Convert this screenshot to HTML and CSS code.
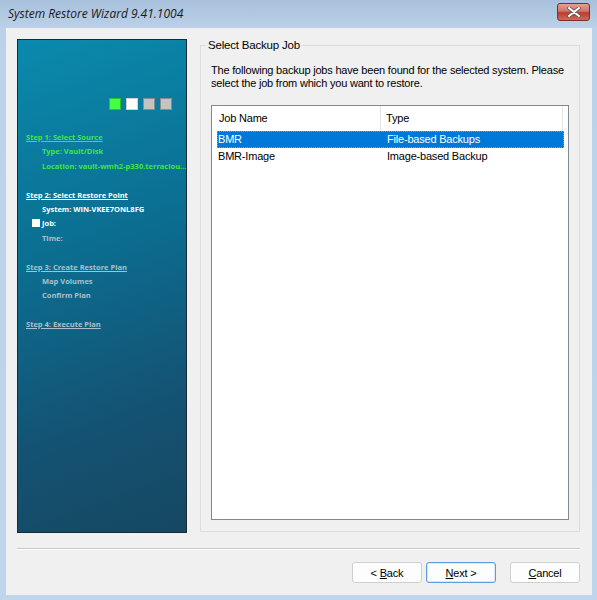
FILE: index.html
```html
<!DOCTYPE html>
<html lang="en">
<head>
    <meta charset="UTF-8">
    <title>System Restore Wizard 9.41.1004</title>
    <link rel="stylesheet" href="styles.css">
</head>
<body>
    <div class="window">
        <div class="titleBar">
            <span class="titleText">System Restore Wizard 9.41.1004</span>
            <button class="closeBtn" type="button" aria-label="Close">
                <svg width="14" height="10" viewBox="0 0 14 10">
                    <path d="M2 1 L12 9 M12 1 L2 9" stroke="#5a5a5a" stroke-width="3.6" stroke-linecap="round"/>
                    <path d="M2 1 L12 9 M12 1 L2 9" stroke="#ffffff" stroke-width="2" stroke-linecap="round"/>
                </svg>
            </button>
        </div>

        <div class="client">
            <div class="mainRow">
                <div class="sidebar">
                    <div class="progress">
                        <span class="dot done"></span>
                        <span class="dot current"></span>
                        <span class="dot"></span>
                        <span class="dot"></span>
                    </div>

                    <div class="steps">
                        <div class="step done">Step 1: Select Source</div>
                        <div class="item done">Type: Vault/Disk</div>
                        <div class="item done">Location: vault-wmh2-p330.terraclou...</div>
                        <div class="gap"></div>

                        <div class="step current">Step 2: Select Restore Point</div>
                        <div class="item current">System: WIN-VKEE7ONL8FG</div>
                        <div class="item current"><span class="marker"></span>Job:</div>
                        <div class="item">Time:</div>
                        <div class="gap"></div>

                        <div class="step">Step 3: Create Restore Plan</div>
                        <div class="item">Map Volumes</div>
                        <div class="item">Confirm Plan</div>
                        <div class="gap"></div>

                        <div class="step">Step 4: Execute Plan</div>
                    </div>
                </div>

                <fieldset class="groupBox">
                    <legend>Select Backup Job</legend>
                    <p class="intro">The following backup jobs have been found for the selected system. Please select the job from which you want to restore.</p>

                    <div class="listView">
                        <div class="listHeader">
                            <div class="colName">Job Name</div>
                            <div class="colType">Type</div>
                        </div>
                        <div class="listRow selected">
                            <div class="colName">BMR</div>
                            <div class="colType">File-based Backups</div>
                        </div>
                        <div class="listRow">
                            <div class="colName">BMR-Image</div>
                            <div class="colType">Image-based Backup</div>
                        </div>
                    </div>
                </fieldset>
            </div>

            <div class="separator"></div>

            <div class="buttonRow">
                <button type="button" class="btn">&lt; <u>B</u>ack</button>
                <button type="button" class="btn default"><u>N</u>ext &gt;</button>
                <button type="button" class="btn cancel"><u>C</u>ancel</button>
            </div>
        </div>
    </div>
</body>
</html>
```

FILE: styles.css
```css
body {
    margin: 0;
    padding: 0;
    font-family: 'Liberation Sans', Arial, sans-serif;
    font-size: 11px;
    letter-spacing: -0.2px;
    color: #000;
    background-color: #bfd5ec;
}

.window {
    width: 597px;
    height: 600px;
    display: flex;
    flex-direction: column;
    background: linear-gradient(#a8c0db 0px, #bcd2ea 30px, #bfd5ec 100%);
}

.titleBar {
    height: 28px;
    display: flex;
    align-items: center;
    justify-content: space-between;
    padding: 0 7px 0 8px;
}

.titleText {
    font-family: 'Open Sans', sans-serif;
    font-style: italic;
    font-size: 12px;
    letter-spacing: 0;
    color: #1a1a1a;
    margin-top: -2px;
}

.closeBtn {
    width: 33px;
    height: 18px;
    margin-top: -5px;
    padding: 0;
    border: 1px solid #7a2e28;
    border-radius: 3px;
    background: linear-gradient(#e2a196 0%, #d0736a 45%, #bb3c2c 55%, #cf6a55 100%);
    display: flex;
    align-items: center;
    justify-content: center;
}

.client {
    flex: 1;
    margin: 0 5px 5px 6px;
    background-color: #f0f0f0;
    padding: 11px 12px 0 11px;
    display: flex;
    flex-direction: column;
}

.mainRow {
    display: flex;
    gap: 13px;
    height: 494px;
}

/* left wizard panel */
.sidebar {
    width: 168px;
    flex-shrink: 0;
    border: 1px solid #1b2b36;
    background: linear-gradient(160deg, #0a8aad 0%, #0b6f92 40%, #145273 75%, #154861 100%);
    font-family: 'Open Sans', sans-serif;
    font-weight: bold;
    font-size: 7.5px;
    letter-spacing: 0;
    color: #aac0ca;
}

.progress {
    display: flex;
    justify-content: flex-end;
    gap: 5px;
    margin-top: 58px;
    padding-right: 14px;
}

.dot {
    width: 10px;
    height: 10px;
    border: 1px solid #8c8c8c;
    background-color: #c3c3c3;
}

.dot.done {
    background-color: #44ff44;
    border-color: #2fbf2f;
}

.dot.current {
    background-color: #ffffff;
    border-color: #d0d0d0;
}

.steps {
    margin-top: 20px;
    padding-left: 8px;
}

.step, .item {
    height: 14.4px;
    line-height: 14.4px;
    white-space: nowrap;
}

.step {
    text-decoration: underline;
}

.item {
    padding-left: 16px;
    position: relative;
}

.gap {
    height: 14.4px;
}

.done {
    color: #3ee83e;
}

.current {
    color: #ffffff;
}

.marker {
    position: absolute;
    left: 6px;
    top: 3px;
    width: 8px;
    height: 8px;
    background-color: #ffffff;
}

/* right group box */
.groupBox {
    flex: 1;
    margin: -1px 0 1px 0;
    border: 1px solid #dcdcdc;
    border-radius: 0;
    padding: 11px 10px 11px 10px;
    display: flex;
    flex-direction: column;
    min-width: 0;
}

.groupBox legend {
    padding: 0 2px;
    margin-left: -5px;
    font-size: 11.5px;
    line-height: 15px;
}

.intro {
    margin: 0 0 16px 0;
    line-height: 12.5px;
}

.listView {
    flex: 1;
    background-color: #ffffff;
    border: 1px solid #828790;
}

.listHeader {
    display: flex;
    height: 25px;
    line-height: 25px;
    margin-right: 5px;
}

.listHeader .colName {
    width: 161px;
    padding-left: 7px;
    border-right: 1px solid #e5e5e5;
}

.listHeader .colType {
    flex: 1;
    padding-left: 5px;
    border-right: 1px solid #e5e5e5;
}

.listRow {
    display: flex;
    height: 17px;
    line-height: 17px;
    margin: 0 4px 0 5px;
}

.listRow .colName {
    width: 169px;
    padding-left: 1px;
}

.listRow .colType {
    flex: 1;
}

.listRow.selected {
    background-color: #0078d7;
    color: #ffffff;
    outline: 1px dotted #e08a3c;
    outline-offset: -1px;
}

.separator {
    margin-top: 15px;
    height: 0;
    border-top: 1px solid #c8c8c8;
    border-bottom: 1px solid #ffffff;
}

.buttonRow {
    display: flex;
    justify-content: flex-end;
    margin-top: 12px;
}

.btn {
    width: 70px;
    height: 21px;
    margin-left: 4px;
    padding: 0;
    font-family: 'Liberation Sans', Arial, sans-serif;
    font-size: 11px;
    letter-spacing: -0.2px;
    color: #000;
    background-color: #fdfdfd;
    border: 1px solid #cfcfcf;
    border-radius: 3px;
}

.btn.default {
    border-color: #5c9ce0;
    box-shadow: inset 0 0 0 1px #d6e8fa;
}

.btn.cancel {
    margin-left: 14px;
}
```
